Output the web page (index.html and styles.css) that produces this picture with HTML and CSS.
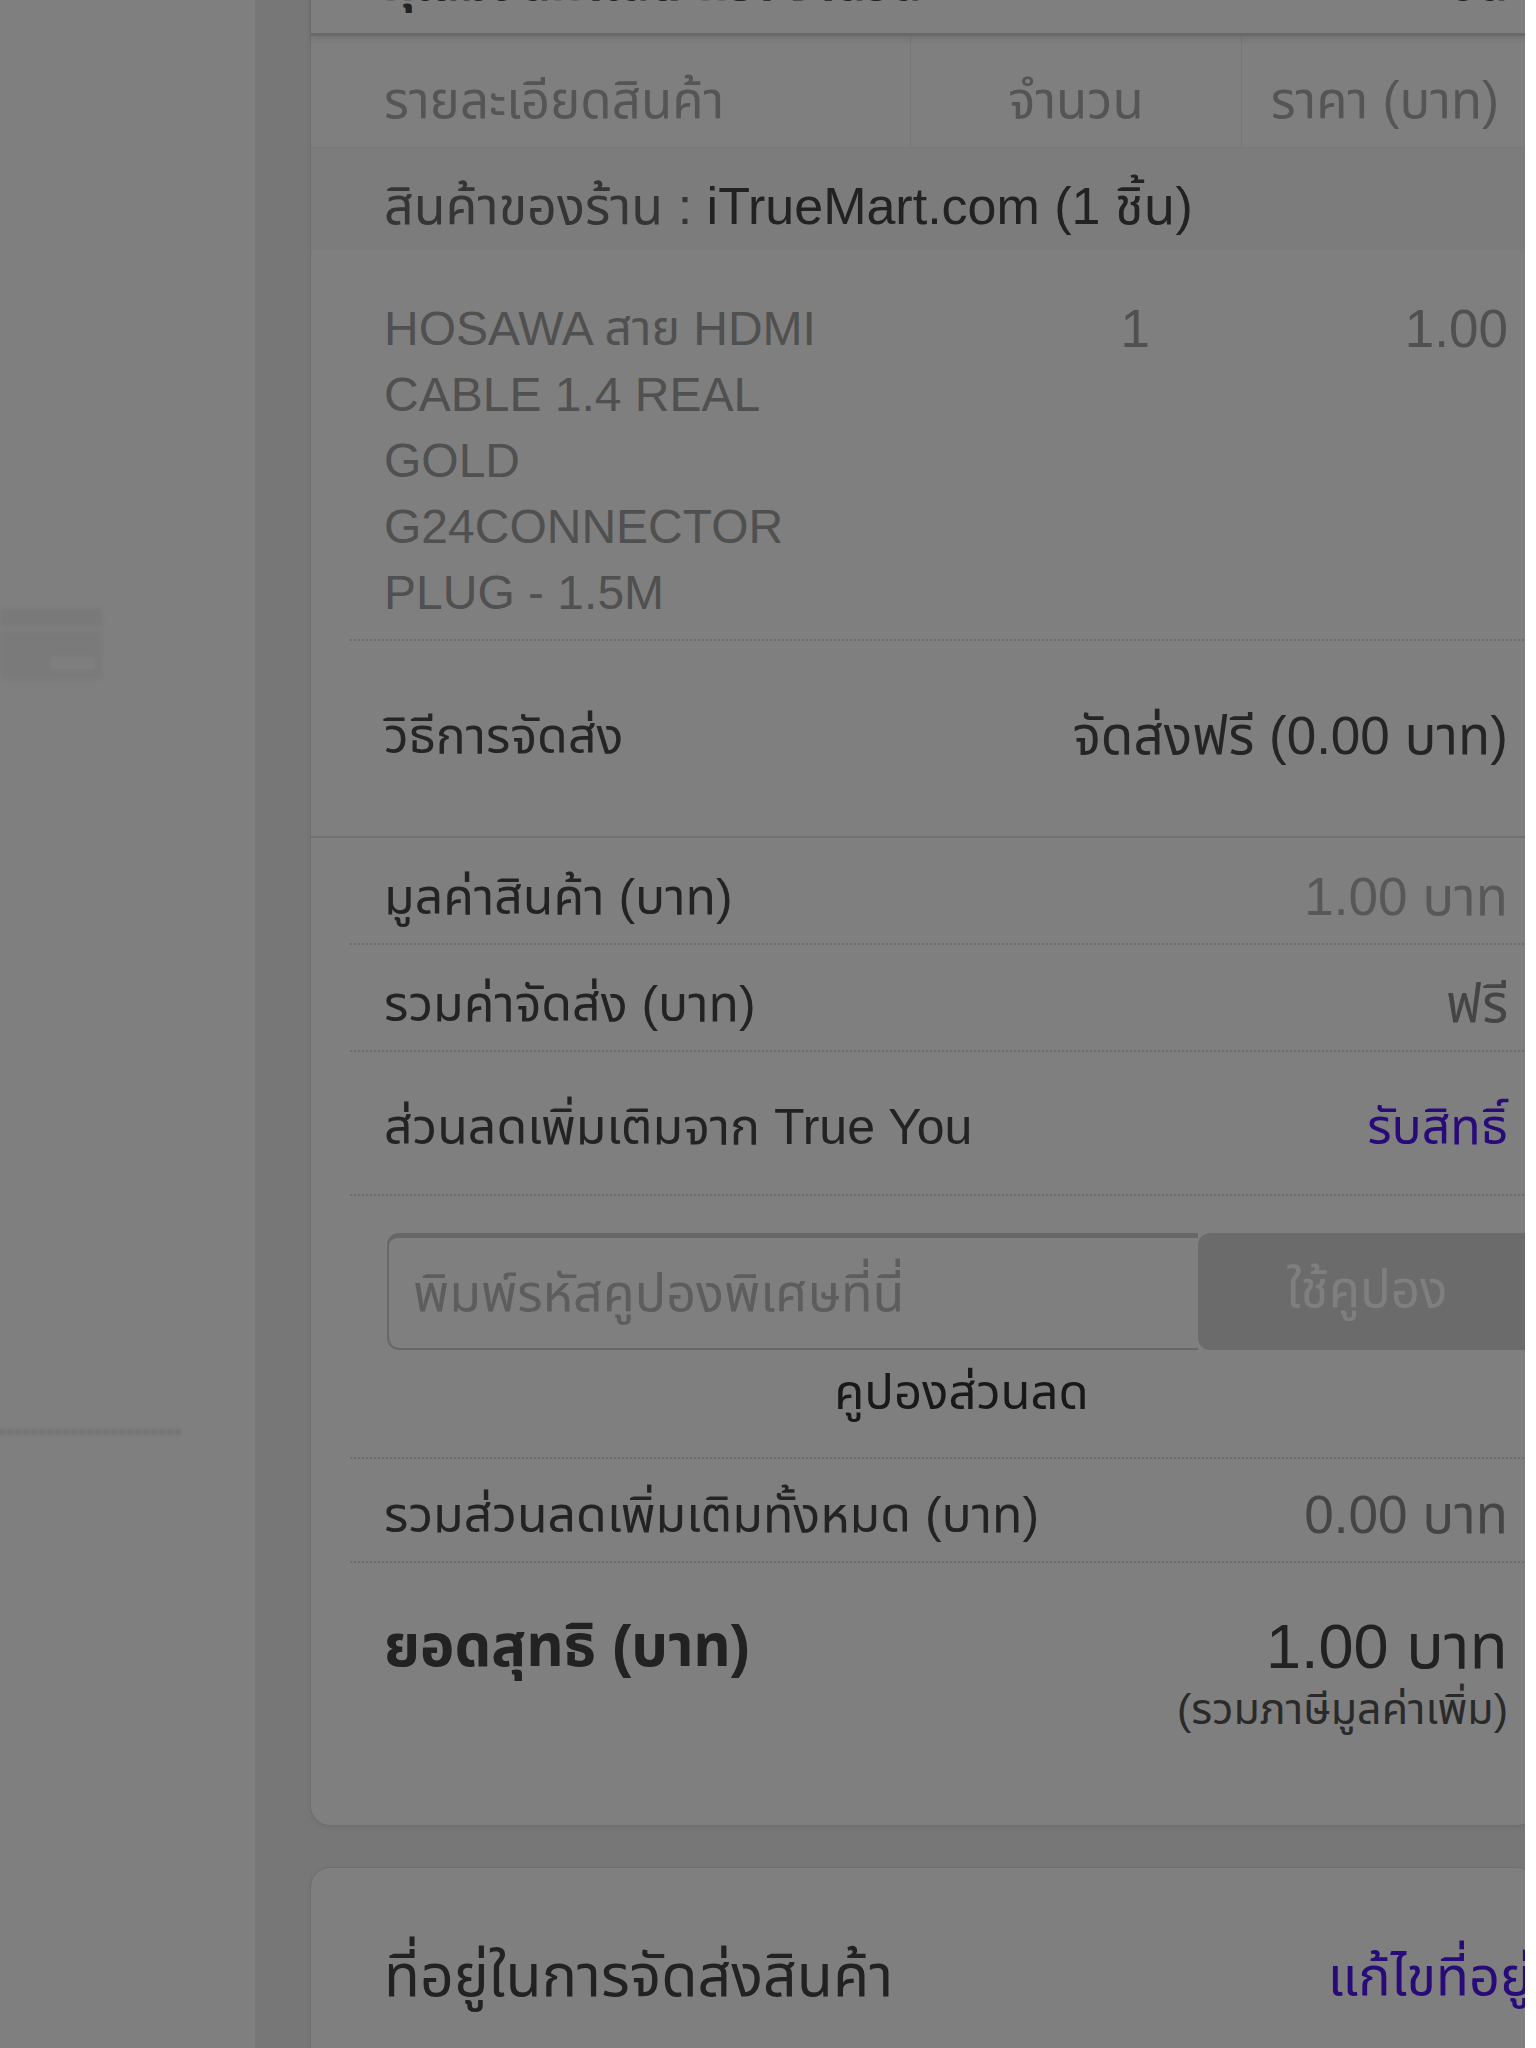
FILE: index.html
```html
<!DOCTYPE html>
<html lang="th">
<head>
    <meta charset="UTF-8">
    <meta name="viewport" content="width=device-width, initial-scale=1.0">
    <title>ตะกร้าสินค้า - iTrueMart</title>
    <link rel="stylesheet" href="styles.css">
</head>
<body>

<div class="page">

    <!-- เมนูด้านซ้าย (เบลอ) -->
    <aside class="side">
        <div class="side-box">
            <div class="side-box-top"></div>
            <div class="side-box-body"><span class="side-btn"></span></div>
        </div>
        <div class="side-rule"></div>
    </aside>

    <main class="main">

        <!-- สรุปตะกร้า -->
        <section class="card cart">
            <div class="cart-head">
                <span>คุณมีสินค้าในตะกร้า จำนวน</span>
                <span>1 ชิ้น</span>
            </div>

            <div class="table-head">
                <div class="th-name">รายละเอียดสินค้า</div>
                <div class="th-qty">จำนวน</div>
                <div class="th-price">ราคา (บาท)</div>
            </div>

            <div class="shop-row">สินค้าของร้าน : <span class="shop-name">iTrueMart.com (1 ชิ้น)</span></div>

            <div class="item">
                <div class="item-name">HOSAWA สาย HDMI<br>CABLE 1.4 REAL<br>GOLD<br>G24CONNECTOR<br>PLUG - 1.5M</div>
                <div class="item-qty">1</div>
                <div class="item-price">1.00</div>
            </div>

            <div class="shipping">
                <span>วิธีการจัดส่ง</span>
                <span>จัดส่งฟรี (0.00 บาท)</span>
            </div>

            <div class="summary">
                <div class="sum-row">
                    <span>มูลค่าสินค้า (บาท)</span>
                    <span class="value light">1.00 บาท</span>
                </div>
                <div class="sum-row">
                    <span>รวมค่าจัดส่ง (บาท)</span>
                    <span class="value">ฟรี</span>
                </div>
                <div class="sum-row tall">
                    <span>ส่วนลดเพิ่มเติมจาก True You</span>
                    <a class="link" href="#">รับสิทธิ์</a>
                </div>

                <div class="coupon">
                    <div class="coupon-form">
                        <input class="coupon-input" type="text" placeholder="พิมพ์รหัสคูปองพิเศษที่นี่">
                        <button class="coupon-btn">ใช้คูปอง</button>
                    </div>
                    <div class="coupon-label">คูปองส่วนลด</div>
                </div>

                <div class="sum-row last">
                    <span>รวมส่วนลดเพิ่มเติมทั้งหมด (บาท)</span>
                    <span class="value">0.00 บาท</span>
                </div>

                <div class="total">
                    <span class="total-label">ยอดสุทธิ (บาท)</span>
                    <div class="total-value">
                        <div class="total-amount">1.00 บาท</div>
                        <div class="total-note">(รวมภาษีมูลค่าเพิ่ม)</div>
                    </div>
                </div>
            </div>
        </section>

        <!-- ที่อยู่ -->
        <section class="card address">
            <div class="address-head">
                <span>ที่อยู่ในการจัดส่งสินค้า</span>
                <a class="link" href="#">แก้ไขที่อยู่</a>
            </div>
        </section>

    </main>

    <!-- ฉากหลังทึบขณะโหลด -->
    <div class="backdrop"></div>
</div>

</body>
</html>
```

FILE: styles.css
```css
body {
    margin: 0;
    background-color: #fff;
    font-family: "Liberation Sans", "Noto Sans Thai", "Noto Sans", sans-serif;
    color: #555;
}

.page {
    position: relative;
    width: 1525px;
    height: 2048px;
    overflow: hidden;
    display: flex;
    background-color: #fff;
}

/* เมนูด้านซ้าย */
.side {
    width: 255px;
    flex: none;
    filter: blur(2px);
}

.side-box {
    margin-top: 608px;
    width: 103px;
}

.side-box-top {
    height: 18px;
    background: #f3f3f3;
    border-bottom: 5px solid #fdfdfd;
}

.side-box-body {
    height: 49px;
    background: #f5f5f5;
    display: flex;
    justify-content: flex-end;
    align-items: flex-end;
    padding: 0 8px 10px 0;
    box-sizing: border-box;
}

.side-btn {
    width: 45px;
    height: 13px;
    background: #fff;
}

.side-rule {
    margin-top: 750px;
    width: 180px;
    border-top: 4px dotted #b0b0b0;
}

/* พื้นที่หลัก */
.main {
    flex: 1;
    background-color: #eee;
    padding-left: 55px;
}

.card {
    width: 1225px;
    background: #fff;
    border: 1px solid #dcdcdc;
    border-radius: 20px;
    box-shadow: 0 2px 4px rgba(0, 0, 0, 0.06);
}

.cart {
    margin-top: -60px;
}

.cart-head {
    height: 95px;
    box-sizing: border-box;
    padding: 0 28px 19px 73px;
    display: flex;
    justify-content: space-between;
    align-items: flex-end;
    font-size: 48px;
    line-height: 60px;
    font-weight: bold;
    color: #444;
    border-bottom: 3px solid #d2d2d2;
    box-shadow: 0 4px 6px rgba(0, 0, 0, 0.09);
    position: relative;
}

/* หัวตาราง */
.table-head {
    display: grid;
    grid-template-columns: 600px 331px 1fr;
    height: 111px;
    font-size: 51px;
    color: #aaa;
    border-bottom: 1px solid #f2f2f2;
}

.table-head div {
    padding-top: 19px;
    line-height: 92px;
}

.th-name {
    padding-left: 73px;
    border-right: 1px solid #f0f0f0;
}

.th-qty {
    text-align: center;
    border-right: 1px solid #f0f0f0;
}

.th-price {
    text-align: right;
    padding-right: 37px;
}

.shop-row {
    height: 103px;
    box-sizing: border-box;
    background: #f8f8f8;
    padding: 14px 0 0 73px;
    line-height: 89px;
    font-size: 52px;
    color: #6a6a6a;
}

.shop-name {
    color: #444;
}

/* รายการสินค้า */
.item {
    margin-left: 39px;
    padding: 45px 28px 13px 34px;
    display: grid;
    grid-template-columns: 450px 1fr 358px;
    font-size: 48px;
    line-height: 66px;
    color: #a0a0a0;
    border-bottom: 2px dotted #dadada;
}

.item-name {
    white-space: nowrap;
}

.item-qty,
.item-price {
    text-align: right;
    font-size: 53px;
}

.shipping {
    display: flex;
    justify-content: space-between;
    padding: 62px 28px 67px 73px;
    font-size: 50px;
    line-height: 66px;
    color: #4a4a4a;
    border-bottom: 2px solid #e0e0e0;
}

.shipping span:last-child {
    font-size: 53px;
}

/* สรุปยอด */
.summary {
    padding-left: 39px;
}

.sum-row {
    display: flex;
    justify-content: space-between;
    padding: 26px 28px 13px 34px;
    font-size: 50px;
    line-height: 66px;
    color: #474747;
    border-bottom: 2px dotted #dadada;
}

.sum-row.tall {
    padding-top: 42px;
    padding-bottom: 34px;
}

.sum-row.last {
    padding-top: 23px;
}

.value {
    color: #8a8a8a;
    font-size: 53px;
}

.value.light {
    color: #b0b0b0;
}

.link {
    color: #5014f0;
    text-decoration: none;
}

/* คูปอง */
.coupon {
    padding: 37px 0 32px 37px;
    border-bottom: 2px dotted #dadada;
}

.coupon-form {
    display: flex;
    height: 117px;
}

.coupon-input {
    width: 811px;
    box-sizing: border-box;
    border: 2px solid #cfcfcf;
    border-top-width: 5px;
    border-right: none;
    border-radius: 12px 0 0 12px;
    padding: 0 24px;
    font-family: inherit;
    font-size: 52px;
    color: #555;
    outline: none;
}

.coupon-input::placeholder {
    color: #bbb;
}

.coupon-btn {
    flex: 1;
    border: none;
    border-radius: 12px;
    background: #d6d6d6;
    color: #fff;
    font-family: inherit;
    font-size: 51px;
}

.coupon-label {
    margin-top: 9px;
    text-align: center;
    font-size: 49px;
    line-height: 66px;
    color: #333;
}

/* ยอดสุทธิ */
.total {
    display: flex;
    justify-content: space-between;
    align-items: flex-start;
    padding: 47px 28px 89px 34px;
}

.total-label {
    font-size: 58px;
    line-height: 72px;
    font-weight: bold;
    color: #444;
}

.total-value {
    text-align: right;
}

.total-amount {
    font-size: 63px;
    line-height: 72px;
    color: #444;
}

.total-note {
    font-size: 43px;
    line-height: 54px;
    color: #555;
}

/* ที่อยู่ */
.address {
    margin-top: 41px;
    height: 400px;
}

.address-head {
    display: flex;
    justify-content: space-between;
    padding: 68px 4px 0 73px;
    line-height: 80px;
    font-size: 59px;
    color: #444;
}

.address-head .link {
    font-size: 54px;
}

/* ฉากทึบ */
.backdrop {
    position: absolute;
    top: 0;
    left: 0;
    right: 0;
    bottom: 0;
    background: rgba(0, 0, 0, 0.5);
}
```
